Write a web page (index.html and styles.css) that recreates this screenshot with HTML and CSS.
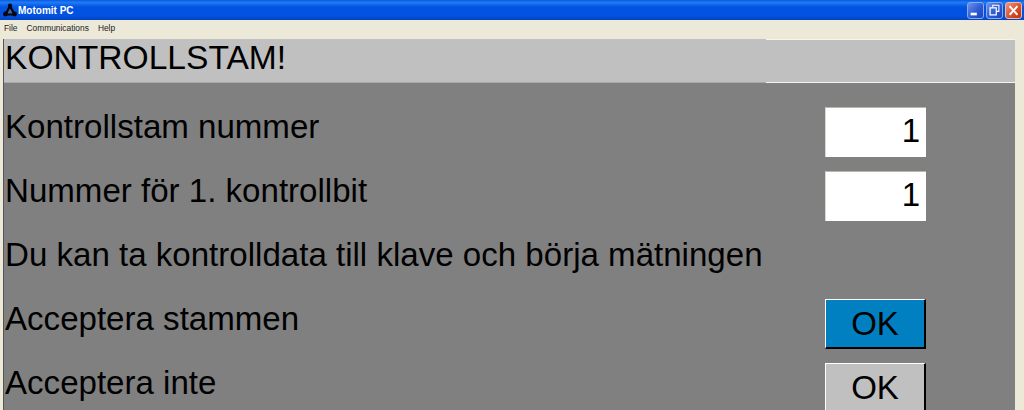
FILE: index.html
```html
<!DOCTYPE html>
<html lang="en">

<head>
    <meta charset="UTF-8">
    <title>Motomit PC</title>
    <link rel="stylesheet" href="styles.css">
</head>

<body>
    <!-- Title bar -->
    <div class="titlebar">
        <svg class="app-icon" width="16" height="16" viewBox="0 0 16 16">
            <path d="M8 4 L3.5 12.5 H12.5 Z" fill="#4a5f96" stroke="#07070f" stroke-width="2.2" stroke-linejoin="round"/>
            <circle cx="8" cy="3.8" r="2.2" fill="#07070f"/>
            <circle cx="3.4" cy="12" r="2.4" fill="#07070f"/>
            <circle cx="12.6" cy="12" r="2.4" fill="#07070f"/>
        </svg>
        <span class="app-title">Motomit PC</span>
        <div class="win-buttons">
            <div class="win-btn">
                <svg width="17" height="17" viewBox="0 0 17 17"><rect x="3" y="11" width="7" height="3" fill="#fff"/></svg>
            </div>
            <div class="win-btn">
                <svg width="17" height="17" viewBox="0 0 17 17" fill="none" stroke="#fff">
                    <path d="M6.5 5 V2.5 H13.5 V9.5 H11" stroke-width="1.2"/>
                    <rect x="3.5" y="5.5" width="7" height="8" stroke-width="1.4"/>
                </svg>
            </div>
            <div class="win-btn win-close">
                <svg width="17" height="17" viewBox="0 0 17 17"><path d="M4 3.5 L13 13.5 M13 3.5 L4 13.5" stroke="#fff" stroke-width="2.2"/></svg>
            </div>
        </div>
    </div>

    <!-- Menu -->
    <div class="menubar">
        <span>File</span>
        <span>Communications</span>
        <span>Help</span>
    </div>

    <!-- Main panel -->
    <div class="panel">
        <div class="heading">
            <div class="heading-text">KONTROLLSTAM!</div>
            <div class="heading-rest"></div>
        </div>
        <div class="rows">
            <div class="row">
                <span class="label">Kontrollstam nummer</span>
                <div class="field">1</div>
            </div>
            <div class="row">
                <span class="label">Nummer för 1. kontrollbit</span>
                <div class="field">1</div>
            </div>
            <div class="row">
                <span class="label">Du kan ta kontrolldata till klave och börja mätningen</span>
            </div>
            <div class="row">
                <span class="label">Acceptera stammen</span>
                <div class="ok-button blue">OK</div>
            </div>
            <div class="row">
                <span class="label">Acceptera inte</span>
                <div class="ok-button">OK</div>
            </div>
        </div>
    </div>
</body>

</html>
```

FILE: styles.css
```css
html, body {
    height: 100%;
}

body {
    margin: 0;
    overflow: hidden;
    background-color: #ece9d8;
    font-family: "Liberation Sans", Arial, sans-serif;
    color: #000;
}

.titlebar {
    display: flex;
    align-items: center;
    height: 20px;
    padding-left: 2px;
    background: linear-gradient(to bottom, #0a5ae0 0%, #1f7cf5 12%, #0353e2 35%, #0152e0 80%, #0343c0 100%);
}

.app-icon {
    flex: none;
}

.app-title {
    font-family: "Liberation Sans", Tahoma, sans-serif;
    font-size: 10px;
    font-weight: bold;
    color: #fff;
}

.win-buttons {
    display: flex;
    gap: 2px;
    margin-left: auto;
    margin-right: 2px;
}

.win-btn {
    width: 17px;
    height: 17px;
    box-sizing: border-box;
    display: flex;
    align-items: center;
    justify-content: center;
    overflow: hidden;
    border: 1px solid #8fa8e8;
    border-radius: 3px;
    background: linear-gradient(135deg, #6d92ea 0%, #2c5cd6 55%, #1c44b8 100%);
}

.win-close {
    border-color: #eeb8a4;
    background: linear-gradient(135deg, #ec9a80 0%, #d9502c 55%, #b93412 100%);
}

.menubar {
    display: flex;
    align-items: center;
    gap: 9px;
    height: 16px;
    padding-left: 4px;
    font-size: 8.4px;
    color: #222;
}

.panel {
    margin: 3px 9px 0 3px;
    height: 380px;
    box-sizing: border-box;
    background-color: #808080;
    border-left: 1px solid #555;
}

.heading {
    display: flex;
    height: 44px;
    background-color: #c0c0c0;
}

.heading-text {
    width: 762px;
    box-sizing: border-box;
    padding-left: 1px;
    border-bottom: 1px solid #a8a8a8;
    font-size: 33.6px;
    line-height: 38px;
}

.heading-rest {
    flex: 1;
    border-top: 1px solid #f4f4ee;
    border-bottom: 1px solid #f4f4ee;
}

.rows {
    display: flex;
    flex-direction: column;
    gap: 14px;
    padding: 24px 89px 0 1px;
}

.row {
    display: flex;
    align-items: center;
    justify-content: space-between;
    height: 50px;
}

.label {
    font-size: 33.1px;
    line-height: 40px;
    margin-top: -11px;
}

.field {
    box-sizing: border-box;
    width: 101px;
    height: 50px;
    padding-right: 6px;
    background-color: #fff;
    border-top: 1px solid #b8b8a8;
    border-left: 1px solid #d8d8cc;
    text-align: right;
    font-size: 33px;
    line-height: 46px;
}

.ok-button {
    box-sizing: border-box;
    width: 101px;
    height: 50px;
    background-color: #c0c0c0;
    border-style: solid;
    border-width: 1px 2px 2px 1px;
    border-color: #fff #000 #000 #fff;
    text-align: center;
    font-size: 33px;
    line-height: 47px;
}

.blue {
    background-color: #0080c0;
}
```
